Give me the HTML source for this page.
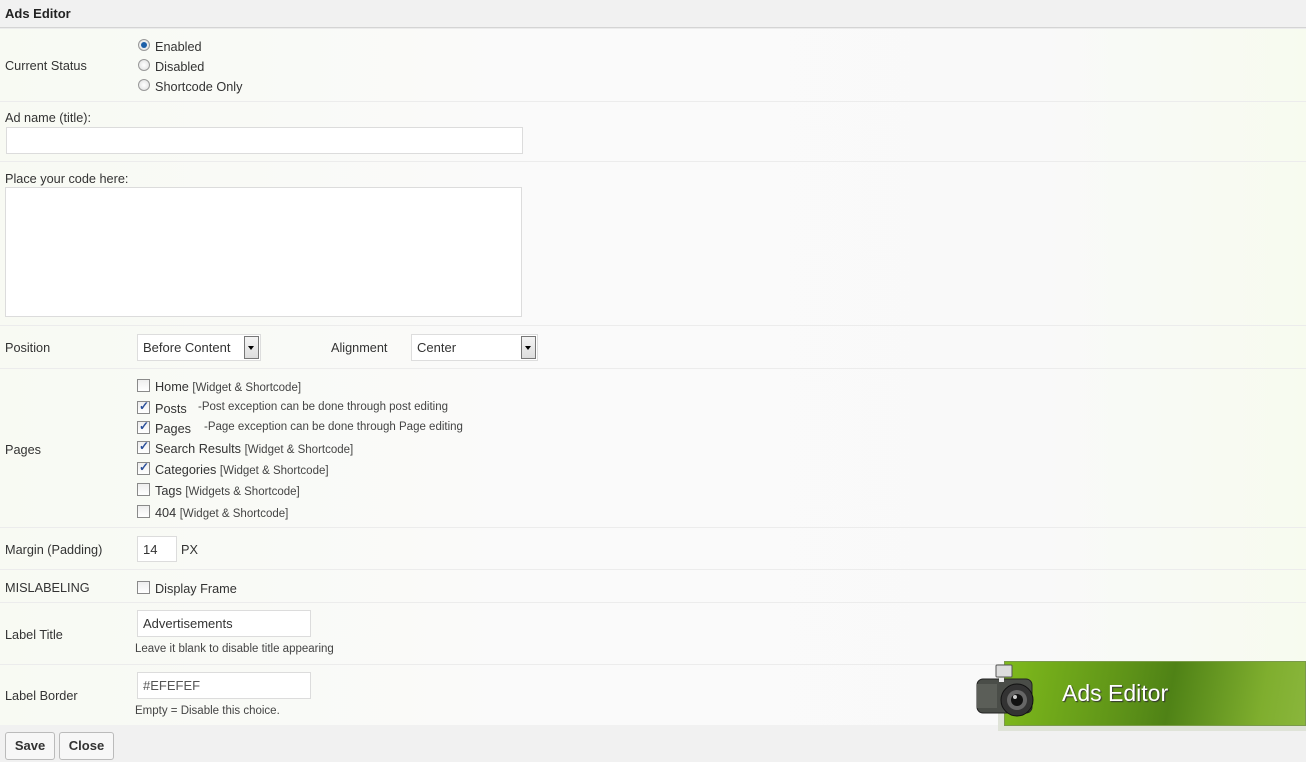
<!DOCTYPE html>
<html><head><meta charset="utf-8"><style>
*{box-sizing:border-box;margin:0;padding:0}
body{width:1306px;height:762px;overflow:hidden;background:#f9faf6;font-family:"Liberation Sans",sans-serif;font-size:12.7px;color:#333;position:relative}
.a{position:absolute;white-space:nowrap}
.t{margin-top:1px}
.hdr{left:0;top:0;width:1306px;height:28px;background:#f1f1f1;border-bottom:1px solid #d4d4d4}
.row{position:absolute;left:0;width:1306px;border-top:1px solid #ececec;background:linear-gradient(90deg,#f8faf3,#fafafa 40%,#f9f9f9 80%,#f7fbef)}
.inp{position:absolute;background:#fff;border:1px solid #dcdcdc;font-size:13px;padding:0 5px;line-height:26px}
.rad{position:absolute;width:12px;height:12px;border-radius:50%;border:1px solid #999;background:radial-gradient(#fff,#ddd)}
.rad.on::after{content:"";position:absolute;left:2px;top:2px;width:6px;height:6px;border-radius:50%;background:#1d5fa8}
.cb{position:absolute;width:13px;height:13px;border:1px solid #8a8a8a;background:linear-gradient(#eee,#fff)}
.cb.on::after{content:"✓";position:absolute;left:1px;top:-3px;font-size:12px;color:#2a4f9a;font-weight:bold}
.sm{font-size:11.5px;color:#444}
.sel{position:absolute;background:#fff;border:1px solid #ddd;font-size:13px;line-height:26px;padding-left:5px}
.sel b{position:absolute;right:1px;top:1px;width:15px;height:23px;border:1px solid #777;background:linear-gradient(#f4f4f4,#ddd)}
.sel b::after{content:"";position:absolute;left:3px;top:9px;border:3px solid transparent;border-top:4px solid #000}
.btn{position:absolute;top:732px;height:28px;border:1px solid #bbb;border-radius:3px;background:#f7f7f7;font-weight:bold;font-size:13px;line-height:26px;text-align:center;color:#333}
</style></head><body>
<div class="a hdr"></div>
<div class="a" style="left:5px;top:6px;font-weight:bold;font-size:13px;color:#222">Ads Editor</div>

<div class="row" style="top:28px;height:74px"></div>
<div class="a t" style="left:5px;top:58px">Current Status</div>
<div class="rad on" style="left:138px;top:39px"></div><div class="a t" style="left:155px;top:39px">Enabled</div>
<div class="rad" style="left:138px;top:59px"></div><div class="a t" style="left:155px;top:59px">Disabled</div>
<div class="rad" style="left:138px;top:79px"></div><div class="a t" style="left:155px;top:79px">Shortcode Only</div>

<div class="row" style="top:101px;height:61px"></div>
<div class="a t" style="left:5px;top:110px">Ad name (title):</div>
<div class="inp" style="left:6px;top:127px;width:517px;height:27px"></div>

<div class="row" style="top:161px;height:165px"></div>
<div class="a t" style="left:5px;top:171px">Place your code here:</div>
<div class="inp" style="left:5px;top:187px;width:517px;height:130px"></div>

<div class="row" style="top:325px;height:44px"></div>
<div class="a t" style="left:5px;top:340px">Position</div>
<div class="sel" style="left:137px;top:334px;width:124px;height:27px">Before Content<b></b></div>
<div class="a t" style="left:331px;top:340px">Alignment</div>
<div class="sel" style="left:411px;top:334px;width:127px;height:27px">Center<b></b></div>

<div class="row" style="top:368px;height:160px"></div>
<div class="a t" style="left:5px;top:442px">Pages</div>
<div class="cb" style="left:137px;top:379px"></div><div class="a t" style="left:155px;top:379px">Home <span class="sm">[Widget &amp; Shortcode]</span></div>
<div class="cb on" style="left:137px;top:401px"></div><div class="a t" style="left:155px;top:401px">Posts</div><div class="a sm t" style="left:198px;top:400px">-Post exception can be done through post editing</div>
<div class="cb on" style="left:137px;top:421px"></div><div class="a t" style="left:155px;top:421px">Pages</div><div class="a sm t" style="left:204px;top:420px">-Page exception can be done through Page editing</div>
<div class="cb on" style="left:137px;top:441px"></div><div class="a t" style="left:155px;top:441px">Search Results <span class="sm">[Widget &amp; Shortcode]</span></div>
<div class="cb on" style="left:137px;top:462px"></div><div class="a t" style="left:155px;top:462px">Categories <span class="sm">[Widget &amp; Shortcode]</span></div>
<div class="cb" style="left:137px;top:483px"></div><div class="a t" style="left:155px;top:483px">Tags <span class="sm">[Widgets &amp; Shortcode]</span></div>
<div class="cb" style="left:137px;top:505px"></div><div class="a t" style="left:155px;top:505px">404 <span class="sm">[Widget &amp; Shortcode]</span></div>

<div class="row" style="top:527px;height:43px"></div>
<div class="a t" style="left:5px;top:542px">Margin (Padding)</div>
<div class="inp" style="left:137px;top:536px;width:40px;height:26px">14</div>
<div class="a t" style="left:181px;top:542px">PX</div>

<div class="row" style="top:569px;height:34px"></div>
<div class="a t" style="left:5px;top:580px">MISLABELING</div>
<div class="cb" style="left:137px;top:581px"></div><div class="a t" style="left:155px;top:581px">Display Frame</div>

<div class="row" style="top:602px;height:63px"></div>
<div class="a t" style="left:5px;top:627px">Label Title</div>
<div class="inp" style="left:137px;top:610px;width:174px;height:27px">Advertisements</div>
<div class="a sm t" style="left:135px;top:642px">Leave it blank to disable title appearing</div>

<div class="row" style="top:664px;height:61px"></div>
<div class="a t" style="left:5px;top:688px">Label Border</div>
<div class="inp" style="left:137px;top:672px;width:174px;height:27px;color:#555">#EFEFEF</div>
<div class="a sm t" style="left:135px;top:704px">Empty = Disable this choice.</div>

<div class="a" style="left:0;top:725px;width:1306px;height:37px;background:#f1f1f1"></div>
<div class="btn" style="left:5px;width:50px">Save</div>
<div class="btn" style="left:59px;width:55px">Close</div>

<div class="a" style="left:998px;top:664px;width:308px;height:67px;background:#dfe3d8"></div>
<div class="a" style="left:1004px;top:661px;width:302px;height:65px;border:1px solid #7a9a4a;background:linear-gradient(100deg,#7fba1c 0%,#5e9318 40%,#4f8216 55%,#7fae2e 85%,#8ab63c)"></div>
<div class="a" style="left:1062px;top:680px;font-size:23px;color:#fff;text-shadow:1px 1px 1px #333">Ads Editor</div>
<svg class="a" style="left:975px;top:662px" width="64" height="58" viewBox="0 0 64 58">
<rect x="21" y="3" width="16" height="12" rx="1" fill="#ddd" stroke="#555"/>
<rect x="2" y="17" width="55" height="34" rx="6" fill="#4a4d48" stroke="#222"/>
<rect x="2" y="22" width="20" height="24" fill="#5b5e58"/>
<circle cx="42" cy="38" r="16" fill="#333" stroke="#111"/>
<circle cx="42" cy="38" r="10" fill="#666"/>
<circle cx="42" cy="38" r="6" fill="#111"/>
<circle cx="40" cy="35" r="2" fill="#ccc"/>
<rect x="24" y="16" width="5" height="4" fill="#eee"/>
</svg>
</body></html>
